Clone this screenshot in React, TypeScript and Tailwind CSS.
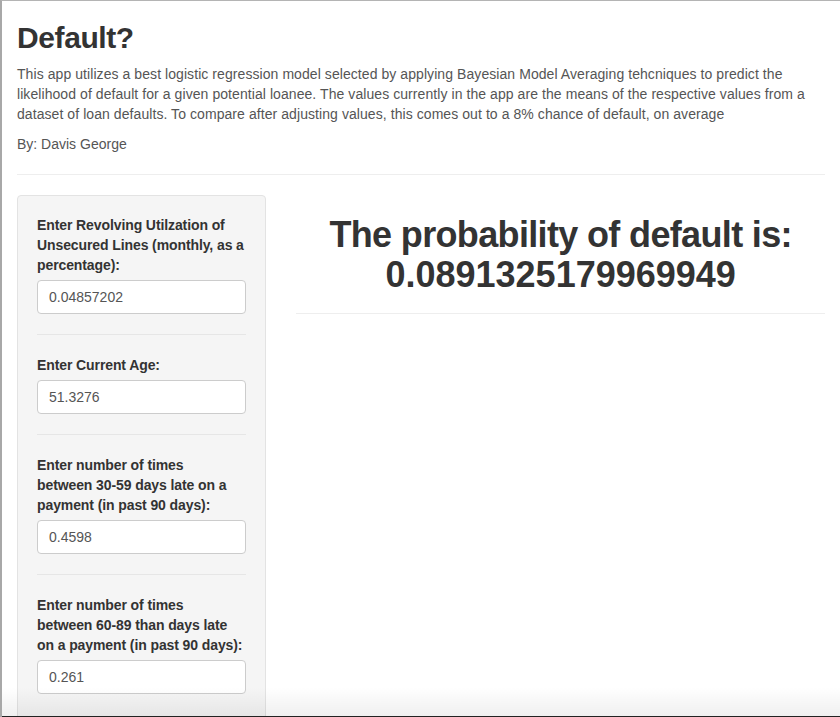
import React from "react";

const fields = [
  {
    lines: ["Enter Revolving Utilzation of", "Unsecured Lines (monthly, as a", "percentage):"],
    value: "0.04857202",
  },
  { lines: ["Enter Current Age:"], value: "51.3276" },
  {
    lines: ["Enter number of times", "between 30-59 days late on a", "payment (in past 90 days):"],
    value: "0.4598",
  },
  {
    lines: ["Enter number of times", "between 60-89 than days late", "on a payment (in past 90 days):"],
    value: "0.261",
  },
];

export default function App() {
  return (
    <div
      className="relative w-[840px] h-[717px] overflow-hidden bg-white border-t border-l-2 border-t-[#b4b4b4] border-l-[#a8a8a8] text-[#333]"
      style={{ fontFamily: '"Liberation Sans", Arial, Helvetica, sans-serif' }}
    >
      <div className="px-[15px]">
        <h2 className="mt-[20px] mb-[10px] text-[30px] leading-[33px] font-bold tracking-[-0.4px] text-[#333]">Default?</h2>
        <p className="text-[14px] leading-[20px] tracking-[0.07px] text-[#555] mb-[10px]">
          This app utilizes a best logistic regression model selected by applying Bayesian Model Averaging tehcniques to predict the
          <br />
          likelihood of default for a given potential loanee. The values currently in the app are the means of the respective values from a
          <br />
          dataset of loan defaults. To compare after adjusting values, this comes out to a 8% chance of default, on average
        </p>
        <p className="text-[14px] leading-[20px] text-[#555] mb-[10px]">By: Davis George</p>
        <hr className="mt-[20px] mb-[20px] border-t border-[#eee]" />
        <div className="flex -mx-[15px]">
          <div className="w-1/3 px-[15px]">
            <div className="bg-[#f5f5f5] border border-[#e3e3e3] rounded-[4px] p-[19px] pb-[30px]">
              {fields.map((f, i) => (
                <div key={i}>
                  {i > 0 && <hr className="mt-[20px] mb-[20px] border-t border-[#e6e6e6]" />}
                  <div className="mb-[5px] text-[14px] leading-[20px] font-bold tracking-[-0.1px] text-[#333] whitespace-nowrap">
                    {f.lines.map((l, j) => (
                      <div key={j}>{l}</div>
                    ))}
                  </div>
                  <div className="h-[34px] w-full bg-white border border-[#ccc] rounded-[4px] px-[11px] flex items-center text-[14px] text-[#555]">
                    {f.value}
                  </div>
                </div>
              ))}
            </div>
          </div>
          <div className="w-2/3 px-[15px]">
            <h1 className="mt-[20px] mb-[10px] text-[36px] leading-[39.6px] font-bold text-center text-[#333]">
              <span className="tracking-[-0.65px]">The probability of default is:</span>
              <br />
              0.0891325179969949
            </h1>
            <hr className="mt-[19px] border-t border-[#eee]" />
          </div>
        </div>
      </div>
      <div className="absolute left-0 right-0 bottom-0 h-[30px] bg-gradient-to-b from-transparent to-[#00000010]" />
      <div className="absolute left-0 right-0 bottom-0 h-[1px] bg-[#222]" />
    </div>
  );
}
